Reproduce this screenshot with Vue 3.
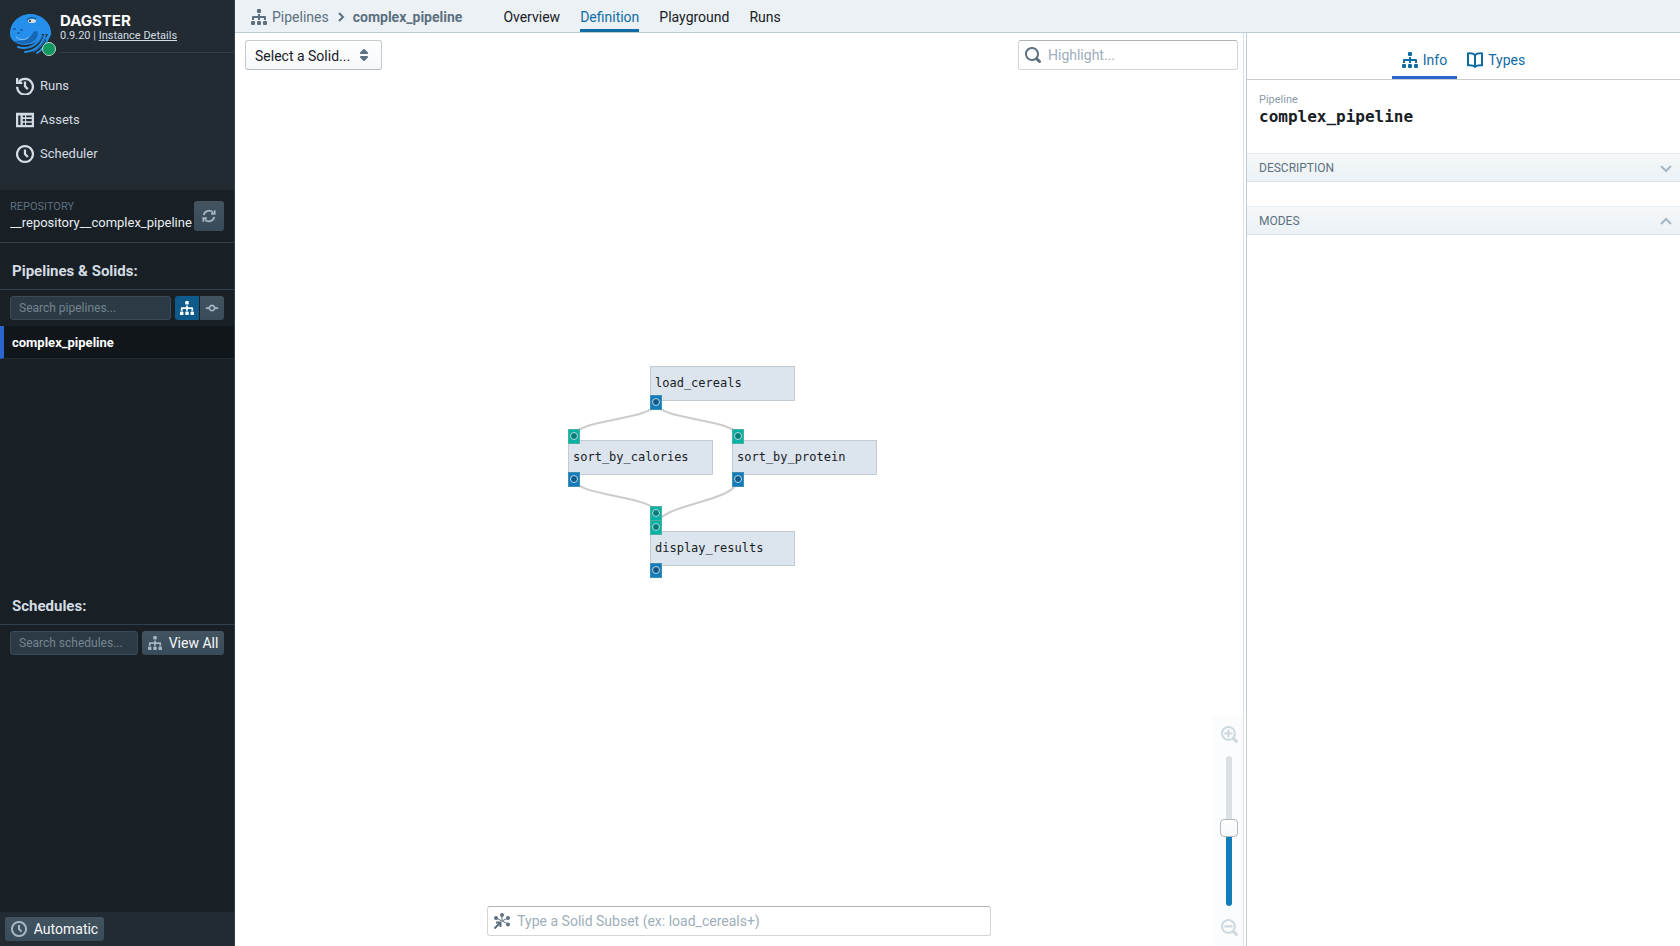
<script setup>
import { ref, computed, h } from 'vue'

const treePath =
  'M15 8v3h-2V9H9v2H7V9H3v2H1V8a1 1 0 01.883-.993L2 7h5V5h2v2h5a1 1 0 01.993.883L15 8zM1 12h2a1 1 0 011 1v2a1 1 0 01-1 1H1a1 1 0 01-1-1v-2a1 1 0 011-1zm12 0h2a1 1 0 011 1v2a1 1 0 01-1 1h-2a1 1 0 01-1-1v-2a1 1 0 011-1zm-6 0h2a1 1 0 011 1v2a1 1 0 01-1 1H7a1 1 0 01-1-1v-2a1 1 0 011-1zM7 0h2a1 1 0 011 1v2a1 1 0 01-1 1H7a1 1 0 01-1-1V1a1 1 0 011-1z'
const searchPath =
  'M15.55 13.43l-2.67-2.68a6.94 6.94 0 001.11-3.76c0-3.87-3.13-7-7-7s-7 3.13-7 7 3.13 7 7 7c1.39 0 2.68-.42 3.76-1.11l2.68 2.67a1.498 1.498 0 102.12-2.12zm-8.56-1.44c-2.76 0-5-2.24-5-5s2.24-5 5-5 5 2.24 5 5-2.24 5-5 5z'

const fills = {
  tree: [treePath],
  search: [searchPath],
  zoomIn: [
    searchPath,
    'M7.99 5.99v-2c0-.55-.45-1-1-1s-1 .45-1 1v2h-2c-.55 0-1 .45-1 1s.45 1 1 1h2v2c0 .55.45 1 1 1s1-.45 1-1v-2h2c.55 0 1-.45 1-1s-.45-1-1-1h-2z',
  ],
  zoomOut: [searchPath, 'M3.99 5.99c-.55 0-1 .45-1 1s.45 1 1 1h6c.55 0 1-.45 1-1s-.45-1-1-1h-6z'],
  carets: [
    'M5 7h6a1.003 1.003 0 00.71-1.71l-3-3C8.53 2.11 8.28 2 8 2s-.53.11-.71.29l-3 3A1.003 1.003 0 005 7zm6 2H5a1.003 1.003 0 00-.71 1.71l3 3c.18.18.43.29.71.29s.53-.11.71-.29l3-3A1.003 1.003 0 0011 9z',
  ],
  table: ['M0 1.500h16v13H0zM2 4v8.500h2V4zM6 4v1.500h2V4zM9 4v1.500h5V4zM6 7v2h2V7zM9 7v2h5V7zM6 10.500v2h2v-2zM9 10.500v2h5v-2z'],
}
const strokes = {
  history: ['M2.600 4.200A7 7 0 1 1 1 8.600', 'M8 4v4.200l2.500 2.600', 'M1 .8v4.400h4.600'],
  time: ['M8 1a7 7 0 1 0 .01 0z', 'M8 4v4l2.500 2.600'],
  refresh: ['M2 7a6 6 0 0 1 10.800-2.600', 'M14.500 1.500v4h-4', 'M14 9a6 6 0 0 1-10.800 2.600', 'M1.500 14.500v-4h4'],
  commit: ['M8 5a3 3 0 1 0 .01 0z', 'M1 8h4M11 8h4'],
  right: ['M6 4l4 4-4 4'],
  down: ['M3 6l5 5 5-5'],
  up: ['M3 11l5-5 5 5'],
  book: ['M8 3C6.500 1.600 3.500 1.200 1 1.400v11.800c2.500-.2 5.500.2 7 1.700 1.500-1.500 4.500-1.900 7-1.700V1.400C12.500 1.200 9.500 1.600 8 3z', 'M8 3v12'],
}
const Icon = (p) => {
  const filled = fills[p.name]
  return h(
    'svg',
    {
      width: p.size || 16,
      height: p.size || 16,
      viewBox: '0 0 16 16',
      'aria-hidden': 'true',
      fill: filled ? 'currentColor' : 'none',
      stroke: filled ? 'none' : 'currentColor',
      'stroke-width': 2,
      'fill-rule': p.name === 'table' ? 'evenodd' : 'nonzero',
    },
    (filled || strokes[p.name]).map((d) => h('path', { d }))
  )
}
Icon.props = ['name', 'size']

const nav = [
  { label: 'Runs', icon: 'history' },
  { label: 'Assets', icon: 'table' },
  { label: 'Scheduler', icon: 'time' },
]
const tabs = ['Overview', 'Definition', 'Playground', 'Runs']
const nodes = [
  { name: 'load_cereals', x: 90, y: 11 },
  { name: 'sort_by_calories', x: 8, y: 85 },
  { name: 'sort_by_protein', x: 172, y: 85 },
  { name: 'display_results', x: 90, y: 176 },
]
const ports = [
  { x: 90, y: 40, kind: 'out' },
  { x: 8, y: 74, kind: 'in' },
  { x: 172, y: 74, kind: 'in' },
  { x: 8, y: 117, kind: 'out' },
  { x: 172, y: 117, kind: 'out' },
  { x: 90, y: 151, kind: 'in' },
  { x: 90, y: 165, kind: 'in' },
  { x: 90, y: 208, kind: 'out' },
]
const link = (x0, y0, x1, y1) => {
  const m = (y0 + y1) / 2
  return `M${x0} ${y0}C${x0} ${m} ${x1} ${m} ${x1} ${y1}`
}
const edges = [link(96, 48, 14, 81), link(96, 48, 178, 81), link(14, 124, 96, 158), link(178, 124, 96, 172)]

const zoom = ref(52)
const zoomStyle = computed(() => ({ '--level': zoom.value + '%' }))
</script>

<template>
  <div class="app">
    <aside class="sidebar">
      <div class="side-top">
        <div class="brand">
          <div class="logo">
            <svg width="42" height="42" viewBox="0 0 42 42" aria-hidden="true">
              <path d="M20 1C31 1 41 9 41 20c0 5-2 8-5 10L14 32C5 31 0 27 0 20 0 10 9 1 20 1z" fill="#2490ec" />
              <path d="M4 28c8 5 18 3 22-2 3-4 2-8 0-8-4 0-3 5-8 7-5 3-10 3-14 3z" fill="#1767b6" />
              <path d="M5 31c12 4 23 0 26-10l10 0v8L34 42H5z" fill="#222b32" />
              <path d="M40 20c-1 3-2 5-4 7" fill="none" stroke="#2490ec" stroke-width="3" />
              <path
                d="M8 34c11 3 20-2 23-12M15 39c10-1 17-7 20-17M27 40c5-3 9-8 11-15"
                fill="none"
                stroke="#2490ec"
                stroke-width="2"
                stroke-linecap="round"
              />
              <path d="M17 35c7-1 13-5 16-13M23 39c6-3 11-8 13-15" fill="none" stroke="#1f7fd2" stroke-width="1" />
              <path d="M6 24c3 3 9 4 13 0" fill="none" stroke="#8fc6f5" stroke-width="1" />
              <path d="M3 16h3M10 17h3M7 20h3" stroke="#1a69b8" stroke-width="2" />
              <ellipse cx="22" cy="8" rx="4" ry="2" fill="#d9dde0" />
              <path d="M17 7c2-3 6-3 9-1" stroke="#18445f" stroke-width="1" fill="none" />
              <circle cx="20" cy="8" r="1" fill="#182026" />
            </svg>
            <span class="status"></span>
          </div>
          <div class="brand-text">
            <div class="word">DAGSTER</div>
            <div class="version">0.9.20 | <a href="#">Instance Details</a></div>
          </div>
        </div>
        <nav class="nav">
          <a v-for="n in nav" :key="n.label" href="#"><Icon :name="n.icon" :size="18" />{{ n.label }}</a>
        </nav>
      </div>

      <div class="repo">
        <div class="repo-text">
          <div class="repo-label">REPOSITORY</div>
          <div class="repo-name">__repository__complex_pipeline</div>
        </div>
        <button class="dark-btn refresh" aria-label="Reload repository"><Icon name="refresh" :size="14" /></button>
      </div>

      <section class="side-section">
        <h2>Pipelines &amp; Solids:</h2>
        <div class="side-tools">
          <input type="text" aria-label="Search pipelines" placeholder="Search pipelines..." />
          <div class="toggle">
            <button class="dark-btn on" aria-label="Pipelines"><Icon name="tree" :size="14" /></button>
            <button class="dark-btn" aria-label="Solids"><Icon name="commit" :size="14" /></button>
          </div>
        </div>
        <a class="side-item" href="#">complex_pipeline</a>
      </section>

      <section class="side-section">
        <h2>Schedules:</h2>
        <div class="side-tools schedules">
          <input type="text" aria-label="Search schedules" placeholder="Search schedules..." />
          <button class="dark-btn view-all"><Icon name="tree" :size="14" /><span>View All</span></button>
        </div>
      </section>

      <div class="side-foot">
        <button class="dark-btn auto"><Icon name="time" /><span>Automatic</span></button>
      </div>
    </aside>

    <main class="main">
      <header class="topbar">
        <div class="crumbs">
          <Icon name="tree" />
          <a href="#">Pipelines</a>
          <Icon name="right" />
          <strong>complex_pipeline</strong>
        </div>
        <nav class="tabs">
          <a v-for="t in tabs" :key="t" href="#" :class="{ active: t === 'Definition' }">{{ t }}</a>
        </nav>
      </header>

      <div class="body">
        <div class="canvas">
          <div class="graph">
            <svg class="edges" width="330" height="230" viewBox="0 0 330 230" aria-hidden="true">
              <path v-for="e in edges" :key="e" :d="e" fill="none" stroke="#ccc" stroke-width="2" />
            </svg>
            <div v-for="n in nodes" :key="n.name" class="node" :style="{ left: n.x + 'px', top: n.y + 'px' }">{{ n.name }}</div>
            <span
              v-for="(p, i) in ports"
              :key="i"
              class="port"
              :class="p.kind"
              :style="{ left: p.x + 'px', top: p.y + 'px' }"
            ></span>
          </div>

          <div class="canvas-top">
            <div class="select">
              <select aria-label="Select a solid">
                <option>Select a Solid...</option>
              </select>
              <Icon name="carets" />
            </div>
            <div class="field highlight">
              <Icon name="search" />
              <input type="text" aria-label="Highlight" placeholder="Highlight..." />
            </div>
          </div>

          <div class="zoom">
            <button aria-label="Zoom in"><Icon name="zoomIn" :size="17" /></button>
            <input v-model="zoom" type="range" min="0" max="100" aria-label="Zoom level" :style="zoomStyle" />
            <button aria-label="Zoom out"><Icon name="zoomOut" :size="17" /></button>
          </div>

          <div class="field subset">
            <svg width="16" height="16" viewBox="0 0 16 16" fill="currentColor" stroke="currentColor" aria-hidden="true">
              <path d="M2 5l12 6M14 5L8 8M8 2v5" fill="none" stroke-width="1" />
              <g stroke="none">
                <circle cx="2" cy="5" r="2" />
                <circle cx="8" cy="2" r="2" />
                <circle cx="14" cy="5" r="2" />
                <circle cx="14" cy="11.500" r="2" />
              </g>
              <path d="M2 9.500h4.500V14M6 10l-5.500 5.500" fill="none" stroke-width="2" />
            </svg>
            <input type="text" aria-label="Solid subset" placeholder="Type a Solid Subset (ex: load_cereals+)" />
          </div>
        </div>

        <aside class="details">
          <nav class="detail-tabs">
            <a href="#" class="active"><Icon name="tree" />Info</a>
            <a href="#"><Icon name="book" />Types</a>
          </nav>
          <div class="title">
            <div class="kind">Pipeline</div>
            <h1>complex_pipeline</h1>
          </div>
          <button class="bar">DESCRIPTION<Icon name="down" /></button>
          <button class="bar">MODES<Icon name="up" /></button>
        </aside>
      </div>
    </main>
  </div>
</template>

<style>
body {
  margin: 0;
}
</style>

<style scoped>
* {
  box-sizing: border-box;
}
.app {
  display: flex;
  height: 100vh;
  overflow: hidden;
  background: #fff;
  color: #182026;
  font: 14px/18px Roboto, "Liberation Sans", sans-serif;
}
a {
  color: inherit;
  text-decoration: none;
}
button,
input,
select {
  font: inherit;
  color: inherit;
  margin: 0;
}
button {
  border: 0;
  padding: 0;
  background: none;
}
svg {
  flex: none;
  display: block;
}

.sidebar {
  flex: none;
  width: 235px;
  display: flex;
  flex-direction: column;
  background: #181f25;
  border-right: 1px solid #30404d;
  color: #d3dce3;
}
.side-top {
  height: 190px;
  background: #222b32;
}
.brand {
  display: flex;
  padding: 13px 0 0 10px;
}
.logo {
  position: relative;
  width: 50px;
  height: 42px;
}
.status {
  position: absolute;
  left: 32px;
  top: 29px;
  width: 14px;
  height: 14px;
  border-radius: 50%;
  background: #0f9960;
  border: 1px solid #b9d8ca;
}
.brand-text {
  flex: 1;
  height: 40px;
  border-bottom: 1px solid #30404d;
}
.word {
  font: 700 15px/15px Inter, sans-serif;
  color: #fff;
}
.version {
  font-size: 11px;
  line-height: 16px;
}
.version a {
  text-decoration: underline;
}
.nav {
  display: flex;
  flex-direction: column;
  padding: 13px 16px;
}
.nav a {
  display: flex;
  align-items: center;
  gap: 6px;
  height: 34px;
  padding-top: 1px;
  font-size: 13px;
}
.repo {
  display: flex;
  align-items: flex-start;
  padding: 10px 10px 0;
  height: 53px;
  border-bottom: 1px solid #30404d;
}
.repo-text {
  flex: 1;
  min-width: 0;
  overflow: hidden;
}
.repo-label {
  font-size: 11px;
  line-height: 14px;
  color: #5c7080;
}
.repo-name {
  white-space: nowrap;
  font-size: 13px;
  line-height: 18px;
  color: #e8edf0;
}
.dark-btn {
  display: flex;
  align-items: center;
  justify-content: center;
  height: 24px;
  background: linear-gradient(#435460, #394b59);
  border-radius: 3px;
  color: #a7b6c2;
}
.dark-btn span {
  color: #f5f8fa;
}
.refresh {
  width: 30px;
  height: 30px;
  margin-top: 1px;
}
.side-section {
  flex: 1;
}
h2 {
  margin: 0;
  padding: 18px 12px 8px;
  font-size: 15px;
  line-height: 20px;
  border-bottom: 1px solid #30404d;
}
.side-tools {
  display: flex;
  gap: 4px;
  padding: 6px 10px;
}
.side-tools input {
  flex: 1;
  min-width: 0;
  height: 24px;
  padding: 0 8px;
  font-size: 12px;
  background: #2c3a45;
  border: 1px solid #394b59;
  border-radius: 3px;
}
.side-tools input::placeholder {
  color: #74848f;
}
.toggle {
  display: flex;
  gap: 1px;
}
.toggle .dark-btn {
  width: 24px;
  border-radius: 0 3px 3px 0;
}
.toggle .on {
  background: #0e5a8a;
  color: #fff;
  border-radius: 3px 0 0 3px;
}
.side-item {
  display: block;
  height: 33px;
  padding-left: 8px;
  font-size: 13px;
  line-height: 34px;
  font-weight: 700;
  color: #fff;
  background: #10161a;
  border-left: 4px solid #2965cc;
  border-bottom: 1px solid #222d36;
}
.view-all {
  width: 82px;
  gap: 7px;
}
.side-foot {
  height: 34px;
  padding: 5px;
  background: #222b32;
}
.auto {
  width: 99px;
  gap: 7px;
}

.main {
  flex: 1;
  min-width: 0;
  display: flex;
  flex-direction: column;
}
.topbar {
  flex: none;
  display: flex;
  gap: 41px;
  height: 33px;
  padding-left: 16px;
  background: #ebf1f5;
  border-bottom: 1px solid #bfccd6;
}
.crumbs {
  display: flex;
  align-items: center;
  gap: 4px;
  padding-top: 2px;
  color: #5c7080;
}
.crumbs a {
  padding-left: 1px;
}
.tabs {
  display: flex;
  gap: 20px;
}
.tabs a {
  line-height: 34px;
  height: 32px;
}
.tabs .active {
  color: #106ba3;
  border-bottom: 3px solid #106ba3;
}
.body {
  flex: 1;
  min-height: 0;
  display: flex;
}
.canvas {
  position: relative;
  flex: 1;
  display: flex;
  flex-direction: column;
  justify-content: space-between;
  padding: 7px 5px 10px 10px;
}
.canvas-top {
  display: flex;
  justify-content: space-between;
}
.select {
  position: relative;
  width: 137px;
  height: 30px;
}
.select select {
  appearance: none;
  width: 100%;
  height: 100%;
  padding: 2px 9px 0;
  border: 1px solid #c4cace;
  border-bottom-color: #b4babd;
  border-radius: 3px;
  background: linear-gradient(#fff, #f5f8fa);
}
.select svg {
  position: absolute;
  right: 10px;
  top: 7px;
  color: #5c7080;
  pointer-events: none;
}
.field {
  display: flex;
  align-items: center;
  gap: 7px;
  height: 30px;
  padding: 0 6px;
  border: 1px solid #d3d6d8;
  border-top-color: #b1b5b8;
  border-radius: 3px;
  background: #fff;
  color: #5c7080;
}
.field input {
  flex: 1;
  min-width: 0;
  padding: 0;
  border: 0;
  background: none;
  outline: 0;
}
.field input::placeholder {
  color: #a0aeb9;
}
.highlight {
  width: 220px;
}
.subset {
  width: calc(50% + 7px);
  margin-left: calc(25% - 6px);
}
.zoom {
  position: absolute;
  right: 0;
  bottom: 0;
  width: 30px;
  height: 230px;
  padding: 10px 0 10px 2px;
  display: flex;
  flex-direction: column;
  align-items: center;
  justify-content: space-between;
  background: #fbfcfd;
  color: #ced9e0;
}
.zoom input {
  appearance: none;
  writing-mode: vertical-lr;
  direction: rtl;
  width: 18px;
  height: 150px;
  background: none;
}
.zoom input::-webkit-slider-runnable-track {
  width: 6px;
  height: 150px;
  border-radius: 3px;
  background: linear-gradient(to top, #137cbd var(--level), #dbe0e4 var(--level));
}
.zoom input::-webkit-slider-thumb {
  appearance: none;
  width: 18px;
  height: 18px;
  margin-left: -6px;
  border: 1px solid #b4b9bd;
  border-radius: 4px;
  background: linear-gradient(#fff, #f5f8fa);
}
.graph {
  position: absolute;
  left: calc(50% - 179px);
  top: calc(50% - 135px);
  width: 330px;
  height: 230px;
}
.edges {
  position: absolute;
}
.node {
  position: absolute;
  width: 145px;
  height: 35px;
  padding-left: 4px;
  border: 1px solid #c3cad0;
  background: #dce5ed;
  font: 12px/32px "DejaVu Sans Mono", monospace;
}
.port {
  position: absolute;
  width: 12px;
  height: 15px;
  border: 1px solid #3f8fae;
  display: flex;
  align-items: center;
  justify-content: center;
}
.port::after {
  content: "";
  width: 6px;
  height: 6px;
  border: 1px solid #bcd7e2;
  border-radius: 50%;
  background: #0e5a8a;
}
.port.out {
  background: #137cbd;
}
.port.in {
  background: #00b3a4;
  border-color: #4fae9f;
}
.port.in::after {
  background: #008075;
}

.details {
  flex: none;
  width: 437px;
  border-left: 1px solid #d8e1e8;
  background: linear-gradient(#bfccd6, #bfccd6) 2px 0 / 1px 100% no-repeat;
  padding-left: 3px;
}
.detail-tabs {
  display: flex;
  justify-content: center;
  align-items: flex-end;
  height: 47px;
  border-bottom: 1px solid #ccc;
  color: #106ba3;
}
.detail-tabs a {
  display: flex;
  align-items: center;
  gap: 5px;
  height: 41px;
  padding: 5px 10px 0;
  border-bottom: 3px solid transparent;
}
.detail-tabs .active {
  border-bottom-color: #2965cc;
}
.title {
  padding: 13px 12px 26px;
}
.kind {
  font-size: 11px;
  line-height: 14px;
  color: #8a9ba8;
}
h1 {
  margin: 0;
  font: 700 16px/20px "DejaVu Sans Mono", monospace;
}
.bar {
  display: flex;
  align-items: center;
  justify-content: space-between;
  width: 100%;
  height: 29px;
  margin-bottom: 24px;
  padding: 0 6px 0 12px;
  font-size: 12px;
  color: #5c7080;
  background: linear-gradient(#f5f8fa, #ebf1f5);
  border-top: 1px solid #e7edf1;
  border-bottom: 1px solid #dbe3e9;
}
.bar svg {
  color: #a7b6c2;
}
</style>
